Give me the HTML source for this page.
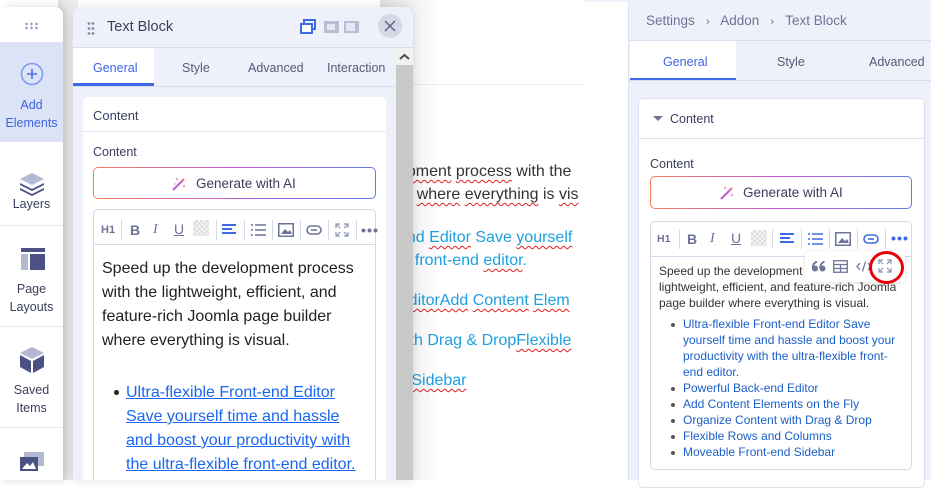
<!DOCTYPE html>
<html><head><meta charset="utf-8"><style>
*{box-sizing:border-box;margin:0;padding:0}
body{width:931px;height:480px;overflow:hidden;background:#fff;font-family:"Liberation Sans",sans-serif;position:relative;color:#3a3f5c}
.a{position:absolute}
.sep{position:absolute;width:1px;height:20px;background:#d5d9ea}
.tb{position:absolute;color:#6d7396;font-size:13px}
.sq{text-decoration:underline wavy #e02020;text-decoration-thickness:1px;text-underline-offset:3px}
</style></head><body>

<div class="a" style="left:413px;top:84px;width:170px;height:1px;background:#eceef2"></div>
<div class="a" style="left:398px;top:160px;width:185px;height:240px;overflow:hidden;font-family:'Liberation Sans',sans-serif;font-size:16px;line-height:24px;white-space:nowrap">
<div class="a" style="left:0;top:0;color:#333"><span class="sq">opment</span> <span class="sq">process</span> with the</div>
<div class="a" style="left:0;top:23px;color:#333"><span class="sq">er</span> <span class="sq">where</span> <span class="sq">everything</span> is <span class="sq">vis</span></div>
<div class="a" style="left:0;top:66px;color:#1ea0e0">end <span class="sq">Editor</span> Save <span class="sq">yourself</span></div>
<div class="a" style="left:0;top:89px;color:#1ea0e0"><span class="sq">le</span> front-end <span class="sq">editor</span>.</div>
<div class="a" style="left:0;top:129px;color:#1ea0e0"> <span class="sq">EditorAdd</span> <span class="sq">Content</span> <span class="sq">Elem</span></div>
<div class="a" style="left:0;top:169px;color:#1ea0e0">vith Drag &amp; Drop<span class="sq">Flexible</span> </div>
<div class="a" style="left:0;top:209px;color:#1ea0e0">d <span class="sq">Sidebar</span></div>
</div>
<div class="a" style="left:380px;top:0;width:60px;height:480px;background:linear-gradient(90deg,rgba(0,0,0,0.12),rgba(0,0,0,0))"></div>
<div class="a" style="left:58px;top:0;width:20px;height:480px;background:linear-gradient(90deg,rgba(0,0,0,0.12),rgba(0,0,0,0.05))"></div>

<div class="a" style="left:0;top:7px;width:63px;height:473px;background:#fff;border-radius:8px 8px 0 0;box-shadow:3px 0 8px rgba(0,0,0,0.15)">
<div class="a" style="left:24px;top:15px;width:15px;height:8px;background:radial-gradient(circle,#9aa0bd 1.2px,transparent 1.4px) 0 0/5px 4px"></div>
<div class="a" style="left:0;top:35px;width:63px;height:100px;background:#dde3f6"></div>
<svg class="a" style="left:20px;top:55px" width="24" height="24"><circle cx="12" cy="12" r="10.5" fill="none" stroke="#7e9bf0" stroke-width="1.6"/><path d="M12 7v10M7 12h10" stroke="#4a6ee8" stroke-width="1.6"/></svg>
<div class="a" style="left:0;top:89px;width:63px;text-align:center;font-size:12.5px;line-height:18px;color:#3e63e0">Add<br>Elements</div>
<div class="a" style="left:0;top:218px;width:63px;height:1px;background:#e6e8f0"></div>
<svg class="a" style="left:19px;top:164px" width="26" height="26"><path d="M13 2 25 8 13 14 1 8Z" fill="#b4b9d3"/><path d="M1 12 13 18 25 12 25 14 13 20 1 14Z" fill="#4b5183"/><path d="M1 17 13 23 25 17 25 19 13 25 1 19Z" fill="#4b5183"/></svg>
<div class="a" style="left:0;top:190px;width:63px;text-align:center;font-size:12.5px;color:#3a3f5c">Layers</div>
<div class="a" style="left:0;top:319px;width:63px;height:1px;background:#e6e8f0"></div>
<svg class="a" style="left:21px;top:241px" width="24" height="22"><rect x="0" y="0" width="24" height="4" fill="#4b5183"/><rect x="0" y="6" width="7" height="16" fill="#b4b9d3"/><rect x="9" y="6" width="15" height="16" fill="#4b5183"/></svg>
<div class="a" style="left:0;top:273px;width:63px;text-align:center;font-size:12.5px;line-height:18px;color:#3a3f5c">Page<br>Layouts</div>
<div class="a" style="left:0;top:420px;width:63px;height:1px;background:#e6e8f0"></div>
<svg class="a" style="left:20px;top:340px" width="24" height="26"><path d="M12 0 24 6 12 12 0 6Z" fill="#b4b9d3"/><path d="M0 8 11 14 11 26 0 20Z M24 8 13 14 13 26 24 20Z" fill="#4b5183"/></svg>
<div class="a" style="left:0;top:374px;width:63px;text-align:center;font-size:12.5px;line-height:18px;color:#3a3f5c">Saved<br>Items</div>
<svg class="a" style="left:20px;top:445px" width="25" height="20"><rect x="4" y="0" width="20" height="14" fill="#b4b9d3"/><rect x="0" y="5" width="18" height="14" fill="#4b5183"/><path d="M2 17 7 11 10 14 13 10 16 17Z" fill="#fff"/></svg>
</div>

<div class="a" style="left:73px;top:7px;width:340px;height:473px;background:#eef1fa;border-radius:8px 8px 0 0;box-shadow:0 0 10px rgba(0,0,0,0.12);overflow:hidden">
<div class="a" style="left:14px;top:14px;width:8px;height:14px;background:radial-gradient(circle,#8d93b3 1.3px,transparent 1.5px) 0 0/4px 5px"></div>
<div class="a" style="left:34px;top:12px;font-size:14.5px;color:#3a3f5c">Text Block</div>
<svg class="a" style="left:227px;top:12px" width="70" height="16"><rect x="4" y="1" width="11" height="9" fill="none" stroke="#3e6ae6" stroke-width="2"/><rect x="1" y="5" width="11" height="9" fill="#fff" stroke="#3e6ae6" stroke-width="2"/><rect x="24" y="2" width="15" height="12" fill="#b8bdd4"/><rect x="27" y="5" width="8" height="6" fill="#e6e9f4"/><rect x="44" y="2" width="15" height="12" fill="#b8bdd4"/><rect x="46" y="4" width="9" height="8" fill="#e6e9f4"/></svg>
<div class="a" style="left:305px;top:7px;width:24px;height:24px;border-radius:50%;background:#d5d9e6"></div>
<svg class="a" style="left:310px;top:12px" width="14" height="14"><path d="M2 2 12 12M12 2 2 12" stroke="#5a6085" stroke-width="1.4"/></svg>
<div class="a" style="left:0;top:40px;width:340px;height:1px;background:#d8dcec"></div>
<div class="a" style="left:0;top:41px;width:81px;height:38px;background:#fff"></div>
<div class="a" style="left:0;top:76px;width:81px;height:3px;background:#3e6ae6"></div>
<div class="a" style="left:0;top:79px;width:323px;height:1px;background:#d8dcec"></div>
<div class="a" style="left:20px;top:54px;font-size:12.5px;color:#3e63e0">General</div>
<div class="a" style="left:109px;top:54px;font-size:12.5px;color:#555a78">Style</div>
<div class="a" style="left:175px;top:54px;font-size:12.5px;color:#555a78">Advanced</div>
<div class="a" style="left:254px;top:54px;font-size:12.5px;color:#555a78">Interaction</div>
<div class="a" style="left:323px;top:41px;width:17px;height:432px;background:#c9c9c9"></div>
<div class="a" style="left:323px;top:41px;width:17px;height:17px;background:#f1f1f1"></div>
<svg class="a" style="left:326px;top:46px" width="11" height="8"><path d="M1 6 5.5 2 10 6" fill="none" stroke="#505050" stroke-width="2"/></svg>
<div class="a" style="left:10px;top:90px;width:303px;height:400px;background:#fff;border-radius:5px">
<div class="a" style="left:10px;top:11px;font-size:13px;color:#3a3f5c">Content</div>
<div class="a" style="left:0;top:34px;width:303px;height:1px;background:#e3e6f0"></div>
<div class="a" style="left:10px;top:48px;font-size:12.5px;color:#3a3f5c">Content</div>
<div class="a" style="left:10px;top:70px;width:283px;height:32px;border-radius:5px;padding:1px;background:linear-gradient(90deg,#f6805a,#c45ad8,#5b7ee6)"><div style="width:100%;height:100%;background:#fff;border-radius:4px"></div></div>
<svg class="a" style="left:88px;top:79px" width="16" height="16"><path d="M2 14 11 5" stroke="#c25cd0" stroke-width="2"/><path d="M11 5 13 3" stroke="#f07070" stroke-width="2"/><circle cx="6" cy="3" r="1" fill="#e67ad0"/><circle cx="13" cy="10" r="1" fill="#e67ad0"/><circle cx="4" cy="8" r=".8" fill="#f08080"/></svg>
<div class="a" style="left:113px;top:79px;font-size:13.5px;color:#3a3f5c">Generate with AI</div>
<div class="a" style="left:10px;top:112px;width:283px;height:300px;border:1px solid #d5d9ea;border-radius:5px"></div>
<div class="a" style="left:11px;top:147px;width:281px;height:1px;background:#d5d9ea"></div>
</div>
</div>

<div class="tb" style="left:101px;top:224px;font-size:11px;font-weight:bold">H1</div>
<div class="sep" style="left:121px;top:220px"></div>
<div class="tb" style="left:130px;top:222px;font-weight:bold;font-size:14px">B</div>
<div class="tb" style="left:153px;top:222px;font-style:italic;font-size:14px;font-family:'Liberation Serif',serif">I</div>
<div class="tb" style="left:174px;top:221px;font-size:14px;text-decoration:underline">U</div>
<div class="a" style="left:193px;top:220px;width:16px;height:16px;background:repeating-conic-gradient(#ddd 0 25%,#f4f4f4 0 50%) 0 0/5px 5px"></div>
<div class="sep" style="left:216px;top:220px"></div>
<svg class="a" style="left:222px;top:224px" width="16" height="12"><path d="M0 1h14M0 5h10M0 9h14" stroke="#3e6ae6" stroke-width="2"/></svg>
<div class="sep" style="left:244px;top:220px"></div>
<svg class="a" style="left:251px;top:224px" width="15" height="12"><path d="M0 1h2M4 1h11M0 6h2M4 6h11M0 11h2M4 11h11" stroke="#6d7396" stroke-width="1.5"/></svg>
<div class="sep" style="left:272px;top:220px"></div>
<svg class="a" style="left:278px;top:223px" width="16" height="14"><rect x=".75" y=".75" width="14.5" height="12.5" fill="none" stroke="#6d7396" stroke-width="1.5"/><path d="M3 11 7 6 10 9 12 7 14 11Z" fill="#6d7396"/></svg>
<div class="sep" style="left:300px;top:220px"></div>
<svg class="a" style="left:306px;top:225px" width="16" height="10"><rect x="1" y="1" width="14" height="8" rx="4" fill="none" stroke="#6d7396" stroke-width="1.6"/><path d="M5 5h6" stroke="#6d7396" stroke-width="1.6"/></svg>
<div class="sep" style="left:328px;top:220px"></div>
<svg class="a" style="left:335px;top:223px" width="14" height="14" fill="none" stroke="#8d93b3" stroke-width="1.2"><path d="M1 5V1h4M9 1h4v4M13 9v4H9M5 13H1V9M1 1l4 4M13 1 9 5M13 13 9 9M1 13l4-4"/></svg>
<div class="sep" style="left:356px;top:220px"></div>
<svg class="a" style="left:361px;top:228px" width="17" height="5"><circle cx="2.5" cy="2.5" r="2" fill="#6d7396"/><circle cx="8.5" cy="2.5" r="2" fill="#6d7396"/><circle cx="14.5" cy="2.5" r="2" fill="#6d7396"/></svg>

<div class="a" style="left:102px;top:257px;width:262px;font-size:16px;line-height:24px;color:#222;font-family:'Liberation Sans',sans-serif">Speed up the development process with the lightweight, efficient, and feature-rich Joomla page builder where everything is visual.</div>
<div class="a" style="left:114px;top:390px;width:5px;height:5px;border-radius:50%;background:#222"></div>
<div class="a" style="left:126px;top:381px;width:240px;font-size:16px;line-height:24px;color:#1a66f0;font-family:'Liberation Sans',sans-serif;text-decoration:underline">Ultra-flexible Front-end Editor Save yourself time and hassle and boost your productivity with the ultra-flexible front-end editor.</div>

<div class="a" style="left:628px;top:0;width:1px;height:480px;background:#dfe2ee"></div>
<div class="a" style="left:629px;top:0;width:302px;height:480px;background:#eef1fa"></div>
<div class="a" style="left:583px;top:0;width:348px;height:2px;background:#eef1fa"></div>
<div class="a" style="left:646px;top:13px;font-size:13.5px;color:#6d7396">Settings &nbsp;&nbsp;<span style="font-size:11px">&#8250;</span>&nbsp;&nbsp; Addon &nbsp;&nbsp;<span style="font-size:11px">&#8250;</span>&nbsp;&nbsp; Text Block</div>
<div class="a" style="left:629px;top:40px;width:302px;height:1px;background:#d8dcec"></div>
<div class="a" style="left:630px;top:41px;width:106px;height:39px;background:#fff"></div>
<div class="a" style="left:630px;top:78px;width:106px;height:3px;background:#3e6ae6"></div>
<div class="a" style="left:629px;top:80px;width:302px;height:1px;background:#d8dcec"></div>
<div class="a" style="left:663px;top:55px;font-size:12.5px;color:#3e63e0">General</div>
<div class="a" style="left:777px;top:55px;font-size:12.5px;color:#555a78">Style</div>
<div class="a" style="left:869px;top:55px;font-size:12.5px;color:#555a78">Advanced</div>
<div class="a" style="left:638px;top:98px;width:287px;height:390px;background:#fff;border:1px solid #dde1ee;border-radius:5px"></div>
<div class="a" style="left:653px;top:116px;width:0;height:0;border-left:5px solid transparent;border-right:5px solid transparent;border-top:5px solid #6d7396"></div>
<div class="a" style="left:670px;top:112px;font-size:12.5px;color:#3a3f5c">Content</div>
<div class="a" style="left:639px;top:138px;width:285px;height:1px;background:#dde1ee"></div>
<div class="a" style="left:650px;top:157px;font-size:12.5px;color:#3a3f5c">Content</div>
<div class="a" style="left:650px;top:176px;width:262px;height:33px;border-radius:5px;padding:1px;background:linear-gradient(90deg,#f6805a,#c45ad8,#5b7ee6)"><div style="width:100%;height:100%;background:#fff;border-radius:4px"></div></div>
<svg class="a" style="left:719px;top:185px" width="16" height="16"><path d="M2 14 11 5" stroke="#c25cd0" stroke-width="2"/><path d="M11 5 13 3" stroke="#f07070" stroke-width="2"/><circle cx="6" cy="3" r="1" fill="#e67ad0"/><circle cx="13" cy="10" r="1" fill="#e67ad0"/></svg>
<div class="a" style="left:743px;top:185px;font-size:13.5px;color:#3a3f5c">Generate with AI</div>
<div class="a" style="left:650px;top:221px;width:262px;height:249px;border:1px solid #d5d9ea;border-radius:5px"></div>
<div class="a" style="left:651px;top:256px;width:260px;height:1px;background:#d5d9ea"></div>
<div class="tb" style="left:657px;top:233px;font-size:10.5px;font-weight:bold">H1</div>
<div class="sep" style="left:679px;top:229px"></div>
<div class="tb" style="left:687px;top:231px;font-weight:bold;font-size:14px">B</div>
<div class="tb" style="left:710px;top:231px;font-style:italic;font-size:14px;font-family:'Liberation Serif',serif">I</div>
<div class="tb" style="left:731px;top:230px;font-size:14px;text-decoration:underline">U</div>
<div class="a" style="left:751px;top:230px;width:16px;height:16px;background:repeating-conic-gradient(#ddd 0 25%,#f4f4f4 0 50%) 0 0/5px 5px"></div>
<div class="sep" style="left:772px;top:229px"></div>
<svg class="a" style="left:780px;top:233px" width="16" height="12"><path d="M0 1h14M0 5h10M0 9h14" stroke="#3e6ae6" stroke-width="2"/></svg>
<div class="sep" style="left:801px;top:229px"></div>
<svg class="a" style="left:808px;top:233px" width="15" height="12"><path d="M0 1h2M4 1h11M0 6h2M4 6h11M0 11h2M4 11h11" stroke="#3e6ae6" stroke-width="1.5"/></svg>
<div class="sep" style="left:829px;top:229px"></div>
<svg class="a" style="left:835px;top:232px" width="16" height="14"><rect x=".75" y=".75" width="14.5" height="12.5" fill="none" stroke="#6d7396" stroke-width="1.5"/><path d="M3 11 7 6 10 9 12 7 14 11Z" fill="#6d7396"/></svg>
<div class="sep" style="left:857px;top:229px"></div>
<svg class="a" style="left:863px;top:234px" width="16" height="10"><rect x="1" y="1" width="14" height="8" rx="4" fill="none" stroke="#3e6ae6" stroke-width="1.6"/><path d="M5 5h6" stroke="#3e6ae6" stroke-width="1.6"/></svg>
<div class="sep" style="left:885px;top:229px"></div>
<svg class="a" style="left:891px;top:236px" width="17" height="5"><circle cx="2.5" cy="2.5" r="2" fill="#3e6ae6"/><circle cx="8.5" cy="2.5" r="2" fill="#3e6ae6"/><circle cx="14.5" cy="2.5" r="2" fill="#3e6ae6"/></svg>
<div class="a" style="left:659px;top:263px;width:245px;font-size:12px;line-height:16px;color:#333">Speed up the development process with the lightweight, efficient, and feature-rich Joomla page builder where everything is visual.</div>
<ul class="a" style="left:683px;top:316px;width:215px;font-size:12px;line-height:16px;color:#1a5fc8;list-style:none">
<li>Ultra-flexible Front-end Editor Save yourself time and hassle and boost your productivity with the ultra-flexible front-end editor.</li>
<li>Powerful Back-end Editor</li>
<li>Add Content Elements on the Fly</li>
<li>Organize Content with Drag &amp; Drop</li>
<li>Flexible Rows and Columns</li>
<li>Moveable Front-end Sidebar</li>
</ul>
<div class="a" style="left:671px;top:323px;width:4px;height:4px;border-radius:50%;background:#555"></div>
<div class="a" style="left:671px;top:387px;width:4px;height:4px;border-radius:50%;background:#555"></div>
<div class="a" style="left:671px;top:403px;width:4px;height:4px;border-radius:50%;background:#555"></div>
<div class="a" style="left:671px;top:419px;width:4px;height:4px;border-radius:50%;background:#555"></div>
<div class="a" style="left:671px;top:435px;width:4px;height:4px;border-radius:50%;background:#555"></div>
<div class="a" style="left:671px;top:451px;width:4px;height:4px;border-radius:50%;background:#555"></div>
<div class="a" style="left:805px;top:251px;width:100px;height:31px;background:#fff;border-radius:4px;box-shadow:0 1px 4px rgba(0,0,0,0.12)"></div>
<svg class="a" style="left:812px;top:261px" width="14" height="11"><circle cx="3" cy="7.5" r="3" fill="#6d7396"/><path d="M0.5 7 Q1 2 5 0.5" stroke="#6d7396" stroke-width="1.8" fill="none"/><circle cx="10.5" cy="7.5" r="3" fill="#6d7396"/><path d="M8 7 Q8.5 2 12.5 0.5" stroke="#6d7396" stroke-width="1.8" fill="none"/></svg>
<svg class="a" style="left:833px;top:260px" width="15" height="13"><rect x=".75" y=".75" width="13.5" height="11.5" fill="none" stroke="#6d7396" stroke-width="1.3"/><path d="M1 4.5h13M1 8.5h13M7.5 4.5v8" stroke="#6d7396" stroke-width="1.2"/></svg>
<svg class="a" style="left:856px;top:260px" width="16" height="13" fill="none" stroke="#6d7396" stroke-width="1.2"><path d="M4 3 1 6.5 4 10M12 3l3 3.5-3 3.5M9.5 1.5 6.5 11.5"/></svg>
<svg class="a" style="left:878px;top:259px" width="14" height="14" fill="none" stroke="#8d93b3" stroke-width="1.2"><path d="M1 5V1h4M9 1h4v4M13 9v4H9M5 13H1V9M1 1l4 4M13 1 9 5M13 13 9 9M1 13l4-4"/></svg>
<div class="a" style="left:869px;top:251px;width:35px;height:33px;border:3px solid #e8000a;border-radius:50%"></div>
</body></html>
